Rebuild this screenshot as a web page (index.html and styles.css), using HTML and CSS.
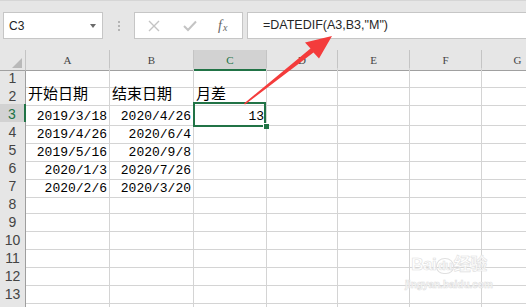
FILE: index.html
```html
<!DOCTYPE html>
<html lang="zh-CN">
<head>
  <meta charset="UTF-8">
  <title>DATEDIF 月差</title>
  <link rel="stylesheet" href="styles.css">
</head>
<body>
  <div class="topbar">
    <div class="namebox"><span>C3</span><span class="caret"></span></div>
    <div class="grip"><i></i><i></i><i></i></div>
    <div class="fbtns">
      <svg width="12" height="12" viewBox="0 0 12 12"><path d="M1 1 L11 11 M11 1 L1 11" stroke="#c4c4c4" stroke-width="1.4" fill="none"/></svg>
      <svg width="14" height="12" viewBox="0 0 14 12"><path d="M1 6 L5 10 L13 1.5" stroke="#c4c4c4" stroke-width="2" fill="none"/></svg>
      <span class="fx">f<sub>x</sub></span>
    </div>
    <div class="formula">=DATEDIF(A3,B3,"M")</div>
  </div>

  <div class="sheet">
    <div class="row head">
      <div class="corner"></div><div>A</div><div>B</div><div class="sel">C</div><div>D</div><div>E</div><div>F</div><div>G</div>
    </div>
    <div class="row"><div class="rh">1</div><div></div><div></div><div></div><div></div><div></div><div></div><div></div></div>
    <div class="row"><div class="rh">2</div><div class="cjk">开始日期</div><div class="cjk">结束日期</div><div class="cjk">月差</div><div></div><div></div><div></div><div></div></div>
    <div class="row"><div class="rh sel">3</div><div class="num">2019/3/18</div><div class="num">2020/4/26</div><div class="num active">13</div><div></div><div></div><div></div><div></div></div>
    <div class="row"><div class="rh">4</div><div class="num">2019/4/26</div><div class="num">2020/6/4</div><div></div><div></div><div></div><div></div><div></div></div>
    <div class="row"><div class="rh">5</div><div class="num">2019/5/16</div><div class="num">2020/9/8</div><div></div><div></div><div></div><div></div><div></div></div>
    <div class="row"><div class="rh">6</div><div class="num">2020/1/3</div><div class="num">2020/7/26</div><div></div><div></div><div></div><div></div><div></div></div>
    <div class="row"><div class="rh">7</div><div class="num">2020/2/6</div><div class="num">2020/3/20</div><div></div><div></div><div></div><div></div><div></div></div>
    <div class="row"><div class="rh">8</div><div></div><div></div><div></div><div></div><div></div><div></div><div></div></div>
    <div class="row"><div class="rh">9</div><div></div><div></div><div></div><div></div><div></div><div></div><div></div></div>
    <div class="row"><div class="rh">10</div><div></div><div></div><div></div><div></div><div></div><div></div><div></div></div>
    <div class="row"><div class="rh">11</div><div></div><div></div><div></div><div></div><div></div><div></div><div></div></div>
    <div class="row"><div class="rh">12</div><div></div><div></div><div></div><div></div><div></div><div></div><div></div></div>
    <div class="row"><div class="rh">13</div><div></div><div></div><div></div><div></div><div></div><div></div><div></div></div>
    <div class="row"><div class="rh"></div><div></div><div></div><div></div><div></div><div></div><div></div><div></div></div>
  </div>

  <!-- 红色箭头指向编辑栏 -->
  <svg class="arrow" width="526" height="307" viewBox="0 0 526 307">
    <polygon points="244,103.5 310.5,48.6 305,42.5 332,36 319,58.5 313.5,52.6 245,104.5" fill="#f43c3c"/>
  </svg>

  <div class="watermark">
    <div class="wm-big">Bai<span class="paw">du</span>经验</div>
    <div class="wm-small">jingyan.baidu.com</div>
  </div>
</body>
</html>
```

FILE: styles.css
```css
body {
  margin: 0;
  width: 526px;
  height: 307px;
  overflow: hidden;
  position: relative;
  background: #fff;
  font-family: "Liberation Sans", Arial, sans-serif;
}

.topbar {
  height: 50px;
  box-sizing: border-box;
  background: #e6e6e6;
  border-top: 1px solid #d6d6d6;
  padding: 11px 0 0 3px;
  display: flex;
  align-items: flex-start;
}

.namebox {
  width: 100px;
  height: 27px;
  box-sizing: border-box;
  background: #fff;
  border: 1px solid #c6c6c6;
  display: flex;
  align-items: center;
  justify-content: space-between;
  padding: 1px 6px 0 5px;
  font-size: 12px;
  color: #222;
}

.caret {
  width: 0;
  height: 0;
  border-left: 3.5px solid transparent;
  border-right: 3.5px solid transparent;
  border-top: 4px solid #6a6a6a;
}

.grip {
  width: 31px;
  display: flex;
  flex-direction: column;
  align-items: center;
  gap: 2px;
  padding-top: 9px;
}

.grip i {
  display: block;
  width: 2px;
  height: 2px;
  background: #b4b4b4;
}

.fbtns {
  width: 109px;
  height: 27px;
  box-sizing: border-box;
  background: #fff;
  border: 1px solid #c6c6c6;
  display: flex;
  align-items: center;
  padding-left: 13px;
  gap: 23px;
}

.fx {
  font-family: "Liberation Serif", serif;
  font-style: italic;
  font-size: 14px;
  color: #666;
  margin-left: -2px;
}

.fx sub {
  font-size: 10px;
  vertical-align: -1px;
  margin-left: 1px;
}

.formula {
  flex: 1;
  margin-left: 4px;
  margin-right: -4px;
  height: 27px;
  box-sizing: border-box;
  background: #fff;
  border: 1px solid #c6c6c6;
  padding-left: 15px;
  font-size: 12.5px;
  line-height: 25px;
  color: #262626;
}

/* 表格区域 */
.sheet {
  width: 526px;
  overflow: hidden;
}

.row {
  display: grid;
  grid-template-columns: 26px 84px 84px 73px 71px 72px 72px 72px;
  height: 18px;
}

.row > div {
  box-sizing: border-box;
  border-right: 1px solid #d4d4d4;
  border-bottom: 1px solid #d4d4d4;
  white-space: nowrap;
  color: #000;
}

.head > div {
  background: #e6e6e6;
  border-right-color: #c4c4c4;
  border-bottom: 1px solid #a0a0a0;
  font-family: "Liberation Serif", serif;
  font-size: 11px;
  line-height: 17px;
  padding-top: 2px;
  text-align: center;
  color: #444;
}

.head > div.sel {
  background: #d2d2d2;
  color: #217346;
  border-bottom: 2px solid #217346;
}

.head .corner {
  position: relative;
}

.corner::after {
  content: "";
  position: absolute;
  right: 3px;
  bottom: 2px;
  width: 0;
  height: 0;
  border-left: 10px solid transparent;
  border-bottom: 10px solid #b9b9b9;
}

.row > .rh {
  background: #e6e6e6;
  border-right-color: #9e9e9e;
  border-bottom-color: #c8c8c8;
  text-align: center;
  font-size: 14px;
  line-height: 17px;
  padding-top: 2px;
  color: #444;
}

.row > .rh.sel {
  background: #d2d2d2;
  color: #217346;
  border-right: 2px solid #217346;
}

.cjk {
  font-family: "Noto Sans CJK SC", sans-serif;
  font-size: 15px;
  line-height: 14px;
  padding-left: 2px;
}

.num {
  font-family: "Liberation Mono", monospace;
  font-size: 13px;
  line-height: 17px;
  padding-top: 4px;
  padding-right: 2px;
  text-align: right;
}

.active {
  position: relative;
}

.active::before {
  content: "";
  position: absolute;
  top: -2px;
  left: -1px;
  right: 0;
  bottom: -2px;
  border: 2px solid #217346;
}

.active::after {
  content: "";
  position: absolute;
  right: -3px;
  bottom: -4px;
  width: 5px;
  height: 5px;
  background: #217346;
  border-left: 1px solid #fff;
  border-top: 1px solid #fff;
}

.arrow {
  position: absolute;
  left: 0;
  top: 0;
}

.watermark {
  position: absolute;
  left: 401px;
  top: 250px;
  width: 96px;
  color: rgba(255, 255, 255, 0.85);
  -webkit-text-stroke: 0.6px #e0e0e0;
  text-align: center;
}

.wm-big {
  font-family: "Liberation Sans", "Noto Sans CJK SC", sans-serif;
  font-weight: bold;
  font-size: 17px;
  line-height: 30px;
  letter-spacing: -0.5px;
}

.paw {
  display: inline-block;
  border: 1px solid #e0e0e0;
  border-radius: 50% 50% 45% 45%;
  padding: 0 1px;
  font-size: 12px;
  line-height: 14px;
}

.wm-small {
  font-size: 10px;
  line-height: 10px;
  font-weight: bold;
}
```
